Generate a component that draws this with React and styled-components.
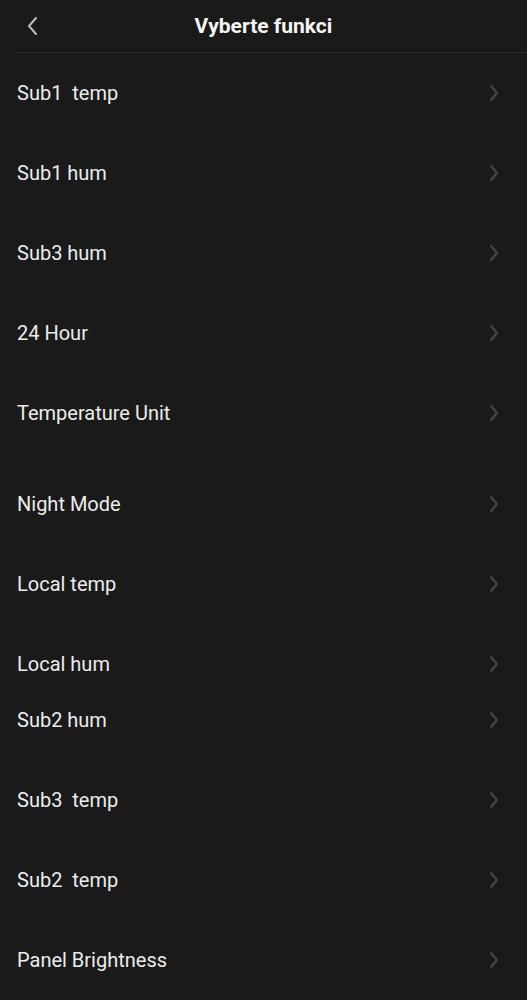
import React from 'react'
import styled, { createGlobalStyle } from 'styled-components'

const GlobalStyle = createGlobalStyle`
  html, body {
    margin: 0;
    padding: 0;
    background: #1a1a1a;
  }
  body {
    font-family: Roboto, "Noto Sans", "Liberation Sans", sans-serif;
    color: #ececec;
  }
`

const Page = styled.div`
  width: 527px;
  min-height: 1000px;
  background: #1a1a1a;
  overflow: hidden;
`

const Header = styled.header`
  height: 52px;
  display: flex;
  align-items: center;
  justify-content: center;
  position: relative;
  margin-left: 16px;
  border-bottom: 1px solid #292929;
`

const BackButton = styled.button`
  position: absolute;
  left: 10px;
  top: 16px;
  background: none;
  border: 0;
  padding: 0;
  width: 14px;
  height: 20px;
  display: flex;
  cursor: pointer;
`

const Title = styled.h1`
  margin: 0 0 0 -16px;
  font-size: 21px;
  font-weight: 700;
  color: #f5f5f5;
`

const List = styled.ul`
  list-style: none;
  margin: 0;
  padding: 0;
`

const Row = styled.li`
  height: ${p => p.$h || 80}px;
  box-sizing: border-box;
  padding: 28px 28px 0 17px;
  display: flex;
  align-items: flex-start;
  justify-content: space-between;
`

const Label = styled.span`
  font-size: 20px;
  line-height: 25px;
  white-space: pre;
`

const Chevron = styled.svg`
  width: 10px;
  height: 18px;
  margin-top: 3px;
`

const items = [
  { label: 'Sub1  temp' },
  { label: 'Sub1 hum' },
  { label: 'Sub3 hum' },
  { label: '24 Hour' },
  { label: 'Temperature Unit', h: 91 },
  { label: 'Night Mode' },
  { label: 'Local temp' },
  { label: 'Local hum', h: 56 },
  { label: 'Sub2 hum' },
  { label: 'Sub3  temp' },
  { label: 'Sub2  temp' },
  { label: 'Panel Brightness' },
]

export default function App() {
  return (
    <Page>
      <GlobalStyle />
      <Header>
        <BackButton>
          <svg width="14" height="20" viewBox="0 0 14 20">
            <polyline points="10,2 3,10 10,18" fill="none" stroke="#bdbdbd" strokeWidth="2" strokeLinecap="round" strokeLinejoin="round" />
          </svg>
        </BackButton>
        <Title>Vyberte funkci</Title>
      </Header>
      <List>
        {items.map(it => (
          <Row key={it.label} $h={it.h}>
            <Label>{it.label}</Label>
            <Chevron viewBox="0 0 10 18">
              <polyline points="2,2 8,9 2,16" fill="none" stroke="#4a4a4a" strokeWidth="2" strokeLinecap="round" strokeLinejoin="round" />
            </Chevron>
          </Row>
        ))}
      </List>
    </Page>
  )
}
